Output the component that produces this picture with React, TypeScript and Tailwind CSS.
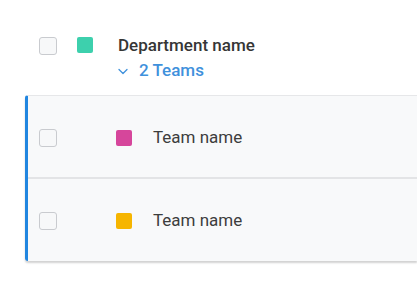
import React from 'react';

const Checkbox: React.FC = () => (
  <span className="block w-[18px] h-[18px] shrink-0 rounded-[3px] border border-[#c9cbcf] bg-[#f7f8f9]" />
);

const Swatch: React.FC<{ color: string }> = ({ color }) => (
  <span className={`block w-4 h-4 shrink-0 rounded-[2px] ${color}`} />
);

const TeamRow: React.FC<{ color: string; last?: boolean }> = ({ color, last }) => (
  <div className={`flex items-center pl-[11px] pt-[2px] ${last ? 'h-[82px]' : 'h-[83px] border-b-2 border-[#e3e4e6]'}`}>
    <Checkbox />
    <span className="ml-[59px]">
      <Swatch color={color} />
    </span>
    <span className="ml-[21px] text-[17px] text-[#3d3d3d]">Team name</span>
  </div>
);

export default function App() {
  return (
    <div className="w-[417px] h-[294px] bg-white font-['Roboto',sans-serif] overflow-hidden">
      <div className="flex items-start pt-[37px] pl-[39px]">
        <Checkbox />
        <span className="ml-[20px]">
          <Swatch color="bg-[#3dd0ad]" />
        </span>
        <div className="ml-[25px] -mt-[4px] flex flex-col">
          <span className="text-[17px] leading-[25px] font-medium text-[#363636]">Department name</span>
          <span className="flex items-center text-[17px] leading-[25px] font-medium text-[#3f91dc]">
            <svg className="w-[10px] h-[10px] mr-[11px]" viewBox="0 0 10 10" fill="none" stroke="currentColor" strokeWidth="1.3" strokeLinecap="round" strokeLinejoin="round">
              <path d="M1 3.5l4 4 4-4" />
            </svg>
            2 Teams
          </span>
        </div>
      </div>
      <div className="ml-[25px] mt-[12px] border-l-[3px] border-[#2186e0] rounded-l-[3px] border-t border-t-[#e6e7e9] bg-[#f8f9fa] shadow-[0_2px_2px_rgba(0,0,0,0.18)]">
        <TeamRow color="bg-[#d6469b]" />
        <TeamRow color="bg-[#f6b500]" last />
      </div>
    </div>
  );
}
